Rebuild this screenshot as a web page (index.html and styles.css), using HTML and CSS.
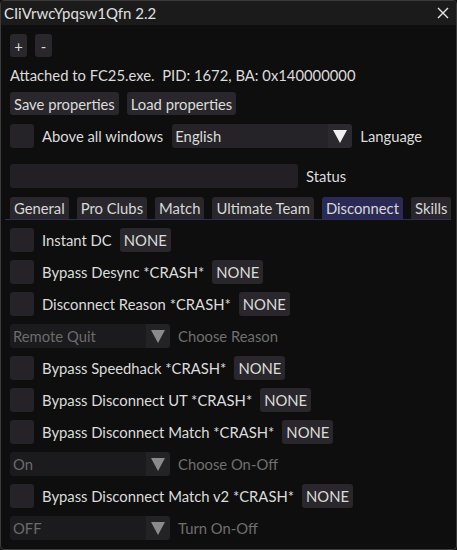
FILE: index.html
```html
<!DOCTYPE html>
<html>
<head>
<meta charset="utf-8">
<link rel="stylesheet" href="styles.css">
</head>
<body>
<div class="window">
  <div class="titlebar">
    <span class="title">CIiVrwcYpqsw1Qfn 2.2</span>
    <svg class="close" width="12" height="12" viewBox="0 0 12 12"><path d="M1 1L11 11M11 1L1 11" stroke="#e6e6e6" stroke-width="1.4"/></svg>
  </div>
  <div class="content">
    <div class="row r1">
      <span class="btn small">+</span>
      <span class="btn small">-</span>
    </div>
    <div class="row r2 text">Attached to FC25.exe.&nbsp; PID: 1672, BA: 0x140000000</div>
    <div class="row r3">
      <span class="btn">Save properties</span>
      <span class="btn">Load properties</span>
    </div>
    <div class="row r4">
      <span class="check"></span>
      <span class="label">Above all windows</span>
      <span class="combo lang"><span class="cval">English</span><span class="carrow"><i class="tri"></i></span></span>
      <span class="label">Language</span>
    </div>
    <div class="row r5">
      <span class="input"></span>
      <span class="label">Status</span>
    </div>
    <div class="row tabs">
      <span class="tab">General</span>
      <span class="tab">Pro Clubs</span>
      <span class="tab">Match</span>
      <span class="tab">Ultimate Team</span>
      <span class="tab active">Disconnect</span>
      <span class="tab">Skills</span>
    </div>
    <div class="list">
      <div class="row item"><span class="check"></span><span class="label">Instant DC</span><span class="btn">NONE</span></div>
      <div class="row item"><span class="check"></span><span class="label">Bypass Desync *CRASH*</span><span class="btn">NONE</span></div>
      <div class="row item"><span class="check"></span><span class="label">Disconnect Reason *CRASH*</span><span class="btn">NONE</span></div>
      <div class="row item"><span class="combo dis"><span class="cval">Remote Quit</span><span class="carrow"><i class="tri"></i></span></span><span class="label dim">Choose Reason</span></div>
      <div class="row item"><span class="check"></span><span class="label">Bypass Speedhack *CRASH*</span><span class="btn">NONE</span></div>
      <div class="row item"><span class="check"></span><span class="label">Bypass Disconnect UT *CRASH*</span><span class="btn">NONE</span></div>
      <div class="row item"><span class="check"></span><span class="label">Bypass Disconnect Match *CRASH*</span><span class="btn">NONE</span></div>
      <div class="row item"><span class="combo dis"><span class="cval">On</span><span class="carrow"><i class="tri"></i></span></span><span class="label dim">Choose On-Off</span></div>
      <div class="row item"><span class="check"></span><span class="label">Bypass Disconnect Match v2 *CRASH*</span><span class="btn">NONE</span></div>
      <div class="row item"><span class="combo dis"><span class="cval">OFF</span><span class="carrow"><i class="tri"></i></span></span><span class="label dim">Turn On-Off</span></div>
    </div>
  </div>
</div>
</body>
</html>
```
FILE: styles.css
```css
* { box-sizing: border-box; }
html, body { margin: 0; padding: 0; background: #0f0f0f; }
body {
  width: 457px; height: 550px; overflow: hidden;
  font-family: Lato, "Liberation Sans", sans-serif;
  font-size: 14.8px; color: #dcdcdc;
}
.window {
  width: 457px; height: 550px;
  border: 1px solid #3b3b3b;
  border-radius: 4px;
  background: #0e0e0e;
  overflow: hidden;
  display: flex; flex-direction: column;
}
.titlebar {
  height: 24px; flex: none;
  background: #1b1b1b;
  display: flex; align-items: center;
  padding: 0 7px 0 3px;
}
.title { flex: 1; font-size: 15px; color: #e0e0e0; }
.close { flex: none; }
.content { padding: 9px 9px 0 9px; display: flex; flex-direction: column; }
.row { display: flex; align-items: center; flex: none; white-space: nowrap; }
.r1 { height: 23px; gap: 8px; }
.r2 { height: 19px; margin-top: 8px; }
.r3 { height: 23px; margin-top: 8px; gap: 8px; }
.r4 { height: 24px; margin-top: 9px; }
.r5 { height: 24px; margin-top: 16px; }
.tabs { height: 23px; margin-top: 9px; gap: 8px; align-items: stretch; border-bottom: 1px solid #2f2d5c; margin-left: -5px; margin-right: -4px; padding-left: 5px; }
.btn {
  height: 23px; display: inline-flex; align-items: center; flex: none;
  background: #29272b; border-radius: 3px; padding: 0 4px;
  color: #dcdcdc;
}
.btn.small { width: 17px; justify-content: center; padding: 0; }
.check { width: 24px; height: 24px; background: #252327; border-radius: 3px; flex: none; }
.label { margin-left: 8px; white-space: nowrap; flex: none; }
.label.dim { color: #6f6f6f; }
.label + .btn { margin-left: 8px; }
.label + .combo { margin-left: 9px; }
.combo { height: 24px; display: flex; border-radius: 3px; overflow: hidden; flex: none; }
.cval { flex: 1; padding-left: 3px; display: flex; align-items: center; }
.carrow { width: 24px; display: flex; align-items: center; justify-content: center; }
.tri { width: 0; height: 0; border-left: 7px solid transparent; border-right: 7px solid transparent; border-top: 13px solid #f0f0f0; display: block; }
.combo.lang { width: 180px; }
.combo.lang .cval { background: #252327; }
.combo.lang .carrow { background: #2b292d; }
.combo.dis { width: 160px; }
.combo.dis .cval { background: #1b1a1c; color: #6c6c6c; }
.combo.dis .carrow { background: #232224; }
.combo.dis .tri { border-top-color: #8a8a8a; }
.input { width: 288px; height: 24px; background: #222024; border-radius: 3px; flex: none; }
.tab {
  background: #29272b; border-radius: 3px 3px 0 0; padding: 0 4px; flex: none;
  display: flex; align-items: center; color: #d8d8d8; white-space: nowrap;
}
.tab.active { background: #2b2a57; }
.list { display: flex; flex-direction: column; gap: 8px; margin-top: 8px; }
.item { height: 24px; }
.item .btn { height: 24px; }
```
